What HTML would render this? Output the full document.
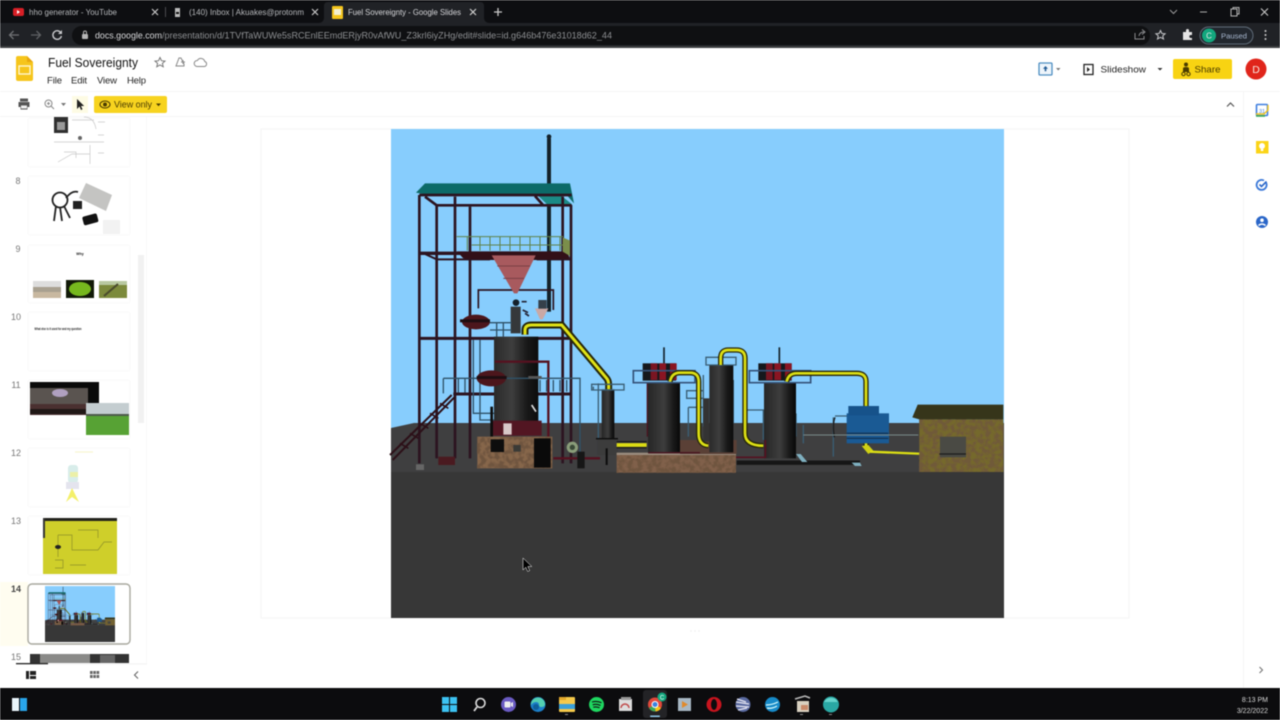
<!DOCTYPE html>
<html lang="en"><head><meta charset="utf-8"><title>Fuel Sovereignty - Google Slides</title>
<style>
html,body{margin:0;padding:0;width:1280px;height:720px;overflow:hidden;background:#fff}
svg{display:block}
#root{filter:blur(.45px)}
text{font-family:"Liberation Sans",sans-serif}
</style></head><body>
<svg id="root" xmlns="http://www.w3.org/2000/svg" width="1280" height="720" viewBox="0 0 1280 720">
<defs>
<linearGradient id="cyl" x1="0" x2="1" y1="0" y2="0"><stop offset="0" stop-color="#262626"/><stop offset=".5" stop-color="#3d3d3d"/><stop offset=".8" stop-color="#181818"/><stop offset="1" stop-color="#090909"/></linearGradient>
<linearGradient id="fur" x1="0" x2="1" y1="0" y2="0"><stop offset="0" stop-color="#2a2a2a"/><stop offset=".4" stop-color="#3e3e3e"/><stop offset=".75" stop-color="#181818"/><stop offset="1" stop-color="#0c0c0c"/></linearGradient>
<filter id="n" x="0" y="0" width="1" height="1"><feTurbulence type="fractalNoise" baseFrequency=".07" numOctaves="2" seed="3"/><feColorMatrix values="0 0 0 0 .16  0 0 0 0 .09  0 0 0 0 .05  0 0 0 4 -1.5"/></filter>
<g id="scene">
<rect x="391" y="129" width="613" height="489" fill="#87cdfd"/>
<polygon points="391,428 414,423 1004,423 1004,618 391,618" fill="#3f3f40"/>
<rect x="391" y="472" width="613" height="146" fill="#373737"/>
<g transform="translate(390 130) scale(.33333)">
 <!-- stack -->
 <rect x="471" y="25" width="12" height="520" fill="#14222a"/><circle cx="477" cy="20" r="7" fill="#14222a"/>
 <!-- roof -->
 <polygon points="78,188 105,160 540,160 552,220 530,195 100,192" fill="#0c6a68"/>
 <polygon points="445,198 515,198 545,222 470,222" fill="#1b8a86"/>
 <g fill="none" stroke="#2c1420">
  <path d="M88 195V1000M140 225V985M195 200V985M240 230V985M518 200V1000M543 225V1000" stroke-width="8"/>
  <path d="M88 195H545M105 200L140 226H545M435 198L460 226" stroke-width="8"/>
  <path d="M90 370H540" stroke-width="10"/><path d="M105 372L140 388H300M440 388H540" stroke-width="6"/>
  <path d="M90 625H540" stroke-width="9"/>
  <path d="M190 792H540" stroke-width="9"/>
  <path d="M265 535V480H490V540" stroke-width="5"/>
 </g>
 <polygon points="200,364 530,364 540,385 450,390 300,390 220,385" fill="#321018"/>
 <g fill="none" stroke="#5f8248" stroke-width="3"><path d="M200 320H520M245 345H520M232 320V362M270 320V362M300 320V362M330 320V362M360 320V362M390 320V362M420 320V362M450 320V362M480 320V362M510 320V362"/></g>
 <polygon points="518,322 540,332 540,378 518,365" fill="#7b8e4b"/>
 <polygon points="305,376 437,376 382,490 372,490" fill="#a85a5e"/>
 <path d="M322 408H420M340 445H402" stroke="#7a3f45" stroke-width="3"/>
 <!-- upper vessels -->
 <ellipse cx="258" cy="576" rx="42" ry="22" fill="#4c161c"/><rect x="210" y="568" width="90" height="9" fill="#1e0e12"/>
 <rect x="362" y="530" width="30" height="80" fill="#35383a"/><circle cx="378" cy="518" r="10" fill="#14202a"/>
 <path d="M395 515h15M398 540l16 8M405 550l12 8" stroke="#223" stroke-width="5"/>
 <polygon points="435,535 475,535 458,568 450,568" fill="#c9a8a5"/><rect x="445" y="510" width="25" height="26" fill="#35404a"/>
 <g fill="none" stroke="#2f5268" stroke-width="4">
  <path d="M300 578H365M300 600H365M320 578V620M340 578V620"/>
  <path d="M250 630V850H312M270 630V870H312"/>
 </g>
 <!-- furnace -->
 <rect x="312" y="620" width="133" height="256" fill="url(#fur)"/>
 <path d="M315 695H475V1000" stroke="#551220" stroke-width="7" fill="none"/>
 <g fill="none" stroke="#2f5268" stroke-width="4">
  <path d="M160 745H570V970M160 745V790M205 745V788M225 745V788M250 745V788M450 750V785M470 750V785M490 750V785M510 750V785M530 750V785"/>
 </g>
 <ellipse cx="304" cy="745" rx="44" ry="24" fill="#4c161c"/><rect x="260" y="738" width="90" height="9" fill="#1e0e12"/>
 <rect x="415" y="738" width="40" height="8" fill="#555"/>
 <rect x="305" y="872" width="150" height="45" fill="#521622"/><rect x="340" y="880" width="25" height="34" fill="#d8c8c8"/>
 <path d="M425 825L438 845" stroke="#ddd" stroke-width="5"/>
 <path d="M305 830V920" stroke="#0c0c0c" stroke-width="8"/>
 <rect x="262" y="920" width="225" height="95" fill="#86664a"/><rect x="262" y="920" width="225" height="95" filter="url(#n)"/>
 <rect x="302" y="928" width="40" height="38" fill="#0d0d0d"/><rect x="432" y="925" width="50" height="88" fill="#0a0a0a"/>
 <rect x="370" y="945" width="22" height="20" fill="#3a3a36"/>
 <rect x="145" y="980" width="50" height="25" fill="#4a1a20"/>
 <rect x="78" y="1003" width="24" height="17" fill="#666"/>
 <circle cx="547" cy="952" r="17" fill="#8a9d7a"/><circle cx="547" cy="952" r="8" fill="#3a4a38"/>
 <path d="M490 985H630" stroke="#551220" stroke-width="7"/><rect x="562" y="965" width="22" height="50" fill="#161616"/>
 <!-- stairs -->
 <g stroke="#2c1018" stroke-width="6" fill="none"><path d="M0 975L185 795M8 990L195 800"/><path d="M30 940L55 955M60 910L85 925M90 880L115 895M120 850L145 865M150 820L175 835" stroke-width="5"/></g>
 <!-- yellow pipe 1 -->
 <path d="M405 614V600Q405 585 425 585H515L650 745Q656 752 656 765V778" fill="none" stroke="#26260a" stroke-width="21"/>
 <path d="M405 614V600Q405 585 425 585H515L650 745Q656 752 656 765V778" fill="none" stroke="#e0e216" stroke-width="9"/>
 <!-- scrubber -->
 <rect x="635" y="778" width="38" height="148" fill="url(#cyl)"/>
 <path d="M605 763H702V780H605ZM625 760V925M610 770V780" fill="none" stroke="#3a5e74" stroke-width="4"/>
 <rect x="622" y="925" width="62" height="50" fill="#3c3c3c"/><path d="M618 926H684" stroke="#0c0c0c" stroke-width="4"/>
 <path d="M650 955V1005" stroke="#0c0c0c" stroke-width="6"/>
</g>
<g transform="translate(590 330) scale(.33333)">
 <rect x="80" y="370" width="358" height="58" fill="#80604a"/><rect x="80" y="370" width="358" height="58" filter="url(#n)"/>
 <rect x="80" y="368" width="358" height="7" fill="#9a8c7e"/>
 <path d="M80 345H170" stroke="#dcdc14" stroke-width="11"/><path d="M80 335H170M80 353H170" stroke="#1c1c1c" stroke-width="4"/>
 <rect x="270" y="330" width="170" height="42" fill="#5a4036"/>
 <!-- tower behind -->
 <g fill="none" stroke="#3a5e74" stroke-width="4"><path d="M290 182H340V205H290ZM295 232V320M295 232H350M340 135V290M430 150V280M470 240H520V330M618 250V320"/><path d="M730 262V380M735 258H775M640 285V340"/></g>
 <rect x="340" y="205" width="18" height="130" fill="#333"/>
 <rect x="358" y="105" width="72" height="262" fill="url(#fur)"/>
 <path d="M348 82H438V105H348Z" fill="none" stroke="#3a5e74" stroke-width="4"/>
 <!-- cyl 1 -->
 <path d="M222 52V100" stroke="#14222a" stroke-width="5"/>
 <rect x="158" y="100" width="100" height="52" fill="#15181c"/><rect x="182" y="100" width="20" height="50" fill="#7a1522"/><rect x="208" y="100" width="20" height="50" fill="#8a1522"/><rect x="240" y="100" width="20" height="50" fill="#8a1522"/>
 <path d="M130 122H315V158H130Z" fill="none" stroke="#35537a" stroke-width="5"/>
 <rect x="174" y="160" width="96" height="210" fill="url(#cyl)"/>
 <path d="M172 160V320M175 368H330" stroke="#4a1420" stroke-width="4"/>
 <!-- cyl 3 -->
 <path d="M568 52V100" stroke="#14222a" stroke-width="5"/>
 <rect x="505" y="100" width="100" height="52" fill="#15181c"/><rect x="528" y="100" width="20" height="50" fill="#7a1522"/><rect x="553" y="100" width="20" height="50" fill="#8a1522"/><rect x="585" y="100" width="20" height="50" fill="#8a1522"/>
 <path d="M478 122H662V158H478Z" fill="none" stroke="#35537a" stroke-width="5"/>
 <rect x="522" y="160" width="96" height="225" fill="url(#cyl)"/>
 <path d="M526 330V382H438" fill="none" stroke="#551220" stroke-width="5"/>
 <path d="M440 398H810" stroke="#161616" stroke-width="13"/>
 <polygon points="618,372 632,372 652,396 636,396" fill="#7fb0c0"/><polygon points="785,398 810,398 815,408 795,408" fill="#7fb0c0"/>
 <!-- pipes -->
 <g fill="none" stroke="#26260a" stroke-width="16">
  <path d="M240 155Q245 128 270 128H300Q326 128 326 155V310Q326 345 355 347"/>
  <path d="M392 105V85Q392 60 415 60H440Q465 60 465 85V310Q465 347 520 347"/>
  <path d="M590 155Q595 130 620 130H800Q828 130 828 155V350"/>
 </g>
 <g fill="none" stroke="#dcdf14" stroke-width="8">
  <path d="M240 155Q245 128 270 128H300Q326 128 326 155V310Q326 345 355 347"/>
  <path d="M392 105V85Q392 60 415 60H440Q465 60 465 85V310Q465 347 520 347"/>
  <path d="M590 155Q595 130 620 130H800Q828 130 828 155V350"/>
 </g>
 <!-- blue tank -->
 <rect x="770" y="250" width="127" height="90" fill="#1a5a94"/><rect x="775" y="228" width="92" height="28" fill="#16528a"/>
 <path d="M770 310H895M770 325H895" stroke="#133658" stroke-width="4"/>
 <path d="M735 262q-8 20-2 60" fill="none" stroke="#1c1c1c" stroke-width="4"/>
 <path d="M640 315H985" stroke="#7a8a8a" stroke-width="3"/>
 <polygon points="815,348 835,345 850,362 835,372" fill="#cfd015"/>
 <path d="M840 365L1010 372" stroke="#dcdf14" stroke-width="7"/>
 <!-- house -->
 <rect x="988" y="268" width="252" height="158" fill="#75692c"/><rect x="988" y="268" width="252" height="158" filter="url(#n)" opacity=".7"/>
 <polygon points="967,262 983,224 1240,224 1240,268 988,268" fill="#36351a"/>
 <rect x="1050" y="320" width="78" height="62" fill="#4a4a44"/>
 <path d="M1048 372H1128" stroke="#1c1c1c" stroke-width="4"/>
</g>
</g>
</defs>

<!-- browser chrome -->
<rect width="1280" height="48" fill="#0d0e11"/>
<path d="M318 23Q324 23 324 17V6Q324 2 328 2H480Q484 2 484 6V17Q484 23 490 23Z" fill="#202226"/>
<rect y="23" width="1280" height="25" fill="#202226"/>
<rect y="46" width="1280" height="2" fill="#3c3d40"/>
<rect x="72" y="26" width="1078" height="19" rx="9.5" fill="#0f1012"/>
<!-- tabs -->
<rect x="13" y="8" width="11" height="8" rx="2" fill="#d81f26"/><path d="M17 10v4l3-2z" fill="#fff"/>
<text x="29" y="15" font-size="8.5" fill="#b5b7ba" textLength="88" lengthAdjust="spacingAndGlyphs">hho generator - YouTube</text>
<path d="M152 9l6 6M158 9l-6 6" stroke="#c8c8c8" stroke-width="1.2"/>
<rect x="165" y="7" width="1" height="10" fill="#4a4b4e"/>
<path d="M175 8h5v9h-5z" fill="#bbb"/><rect x="176" y="12" width="3" height="2" fill="#111"/>
<text x="189" y="15" font-size="8.5" fill="#b5b7ba" textLength="115" lengthAdjust="spacingAndGlyphs">(140) Inbox | Akuakes@protonm</text>
<path d="M312 9l6 6M318 9l-6 6" stroke="#c8c8c8" stroke-width="1.2"/>
<rect x="332" y="6" width="11" height="13" rx="1" fill="#f4c51c"/><rect x="334" y="9" width="7" height="6" fill="#f3efcf"/>
<text x="348" y="15" font-size="8.5" fill="#d4d5d8" textLength="113" lengthAdjust="spacingAndGlyphs">Fuel Sovereignty - Google Slides</text>
<path d="M470 9l6 6M476 9l-6 6" stroke="#d0d0d0" stroke-width="1.2"/>
<path d="M498 8v8M494 12h8" stroke="#c8c8c8" stroke-width="1.3"/>
<path d="M1170 10l3.5 3.5 3.5-3.5" fill="none" stroke="#9a9a9a"/>
<path d="M1200 12h7" stroke="#aaa"/>
<rect x="1231" y="9" width="6" height="7" fill="none" stroke="#b5b5b5"/><path d="M1233 9V7.500h6v6.500h-2" fill="none" stroke="#b5b5b5"/>
<path d="M1261 8.500l7 7M1268 8.500l-7 7" stroke="#c8c8c8" stroke-width="1.1"/>
<!-- nav -->
<path d="M19 35h-9M13.500 31l-4 4 4 4" fill="none" stroke="#6f7174" stroke-width="1.300"/>
<path d="M31 35h9M36.500 31l4 4-4 4" fill="none" stroke="#5f6164" stroke-width="1.300"/>
<path d="M61 33a4.300 4.300 0 1 0 .4 3" fill="none" stroke="#c8c9cc" stroke-width="1.400"/><path d="M62 30v4h-4z" fill="#c8c9cc"/>
<rect x="82" y="34" width="6" height="5" rx="1" fill="#b5b5b5"/><path d="M83.500 34v-1.500a1.500 1.500 0 0 1 3 0V34" fill="none" stroke="#b5b5b5"/>
<text x="95" y="38.500" font-size="9" fill="#d8d9db" textLength="67" lengthAdjust="spacingAndGlyphs">docs.google.com</text>
<text x="162" y="38.500" font-size="9" fill="#8d8f92" textLength="450" lengthAdjust="spacingAndGlyphs">/presentation/d/1TVfTaWUWe5sRCEnlEEmdERjyR0vAfWU_Z3krl6iyZHg/edit#slide=id.g646b476e31018d62_44</text>
<path d="M1135 33v6h9v-3M1139 36q.5-4 5-4M1142 29.500l3 2.500-3 2.500" fill="none" stroke="#8a8b8e"/>
<path d="M1160.500 30.500l1.400 3 3.200.3-2.400 2.100.8 3.100-3-1.700-3 1.700.8-3.100-2.400-2.100 3.200-.3z" fill="none" stroke="#c8c9cc"/>
<path d="M1183 33h3v-1.500a1.500 1.500 0 0 1 3 0V33h3v3h-1.200a1.500 1.500 0 0 0 0 3H1192v2h-9z" fill="#e4e4e4" transform="translate(0 -1)"/>
<rect x="1200" y="27" width="53" height="17" rx="8.500" fill="#22272e" stroke="#5f6b78"/>
<circle cx="1209" cy="35.500" r="7" fill="#13a77e"/><text x="1209" y="38.500" font-size="8" fill="#e8e8e8" text-anchor="middle">C</text>
<text x="1221" y="38.500" font-size="7.500" fill="#a8b8d0" textLength="26" lengthAdjust="spacingAndGlyphs">Paused</text>
<circle cx="1265.500" cy="31" r="1" fill="#ccc"/><circle cx="1265.500" cy="35" r="1" fill="#ccc"/><circle cx="1265.500" cy="39" r="1" fill="#ccc"/>

<!-- header -->
<rect y="91" width="1280" height="1" fill="#f6f6f6"/>
<rect y="116" width="1243" height="1" fill="#f5f5f5"/>
<rect x="1243" y="92" width="1" height="596" fill="#f6f6f6"/>
<path d="M16 58Q16 56 18 56H27L33 62V79Q33 81 31 81H18Q16 81 16 79Z" fill="#f6c51b"/><path d="M27 56l6 6h-6z" fill="#e8a80e"/><rect x="19" y="66" width="11" height="8" fill="none" stroke="#fff6cf" stroke-width="1.400"/>
<text x="48" y="67" font-size="12.500" fill="#111" textLength="90" lengthAdjust="spacingAndGlyphs">Fuel Sovereignty</text>
<path d="M160 57.500l1.500 3.200 3.500.4-2.600 2.300.8 3.400-3.200-1.800-3.200 1.800.8-3.400-2.600-2.300 3.500-.4z" fill="none" stroke="#777" stroke-width="1"/>
<path d="M176 66l3-8 2 0 3 6v2zM181 62h4M183 60v4" fill="none" stroke="#888" stroke-width="1"/>
<path d="M197 66.500a3 3 0 0 1 .4-6a4 4 0 0 1 7.400 1a2.600 2.600 0 0 1-.3 5z" fill="none" stroke="#888" stroke-width="1"/>
<g font-size="9.500" fill="#222"><text x="47" y="83.500" textLength="15">File</text><text x="71" y="83.500" textLength="16">Edit</text><text x="97" y="83.500" textLength="20">View</text><text x="127" y="83.500" textLength="19">Help</text></g>
<!-- toolbar -->
<path d="M20 101.500v-3h8v3M18.500 102h11v5h-2v2.500h-7V107h-2z" fill="#555"/><rect x="21" y="105.500" width="6" height="3" fill="#eee"/>
<circle cx="48.500" cy="103.500" r="3.500" fill="none" stroke="#888"/><path d="M51 106l3 3M47 103.500h3M48.500 102v3" stroke="#888"/>
<path d="M61 103h5l-2.500 3z" fill="#777"/>
<rect x="72" y="96" width="16" height="17" fill="#fdfbe4"/>
<path d="M77 99v10l2.500-2.500 1.500 3.500 1.500-.7-1.500-3.300h3.200z" fill="#222"/>
<rect x="94" y="96" width="73" height="17" rx="2" fill="#f7d31f"/>
<circle cx="105" cy="104.500" r="2" fill="#4a3c00"/><ellipse cx="105" cy="104.500" rx="5" ry="3.500" fill="none" stroke="#4a3c00" stroke-width="1.100"/>
<text x="114" y="107.500" font-size="9" fill="#4a3c00" textLength="38" lengthAdjust="spacingAndGlyphs">View only</text>
<path d="M156 103.500h5l-2.500 2.700z" fill="#4a3c00"/>
<path d="M1227 106.500l3.500-3.500 3.500 3.500" fill="none" stroke="#555" stroke-width="1.200"/>
<!-- right header -->
<rect x="1039" y="63" width="13" height="12" rx="1" fill="#eef5fb" stroke="#4d8ec2" stroke-width="1.300"/><path d="M1045.500 66l-2.500 2.700h1.700v2.500h1.600v-2.500h1.700z" fill="#1f5a94"/>
<path d="M1056 68h4.500l-2.250 2.500z" fill="#777"/>
<rect x="1084" y="64.500" width="9" height="10" fill="none" stroke="#222" stroke-width="1.300"/><path d="M1087 67v5l3-2.500z" fill="#222"/>
<text x="1100.500" y="72.500" font-size="9.500" fill="#222" textLength="45.500" lengthAdjust="spacingAndGlyphs">Slideshow</text>
<path d="M1157.500 68h5l-2.500 2.500z" fill="#333"/>
<rect x="1173" y="59" width="59" height="20" rx="2" fill="#f8d312"/>
<circle cx="1186" cy="64.500" r="2" fill="#4a3c00"/><path d="M1183 72v-3.500q0-1.500 3-1.500t3 1.500V72z" fill="#4a3c00"/><circle cx="1183.500" cy="74" r="1.700" fill="none" stroke="#4a3c00"/><circle cx="1188.500" cy="74" r="1.700" fill="none" stroke="#4a3c00"/>
<text x="1194.500" y="72.500" font-size="9.500" fill="#4a3c00" textLength="26" lengthAdjust="spacingAndGlyphs">Share</text>
<circle cx="1256" cy="69" r="10.500" fill="#e0251b"/><text x="1256" y="73" font-size="10.500" fill="#f8e8e0" text-anchor="middle">D</text>
<!-- side panel -->
<rect x="1256.500" y="104.500" width="11" height="11" rx="1" fill="#fff" stroke="#3f7fe0" stroke-width="1.600"/><path d="M1256 114h8l4-4v-5" fill="none" stroke="#f5c518" stroke-width="1.400"/><path d="M1256 116h9" stroke="#34a853" stroke-width="1.500"/><text x="1262" y="113" font-size="5.500" fill="#3f7fe0" text-anchor="middle">31</text>
<rect x="1256" y="141" width="12.500" height="12.500" fill="#fbd417"/><circle cx="1262" cy="146" r="3" fill="#fff"/><rect x="1260.800" y="149" width="2.500" height="2" fill="#fff"/>
<path d="M1266 182.500a5 5 0 1 1-2-2" fill="none" stroke="#3a78d8" stroke-width="1.800"/><path d="M1259.500 184.500l2 2 5-5" fill="none" stroke="#2a66c8" stroke-width="1.600"/>
<circle cx="1262" cy="222" r="6" fill="#2a66c8"/><circle cx="1262" cy="220.200" r="1.800" fill="#fff"/><path d="M1258.500 225.500q3.500-3 7 0" fill="none" stroke="#fff" stroke-width="1.500"/>
<path d="M1259.500 667l3 3-3 3" fill="none" stroke="#777" stroke-width="1.100"/>

<!-- filmstrip frames -->
<g fill="#fff" stroke="#f9f9f9"><rect x="28" y="118" width="102" height="49" rx="2"/><rect x="28" y="176" width="102" height="59" rx="2"/><rect x="28" y="245" width="102" height="58" rx="2"/><rect x="28" y="312" width="102" height="59" rx="2"/><rect x="28" y="380" width="102" height="59" rx="2"/><rect x="28" y="448" width="102" height="59" rx="2"/><rect x="28" y="516" width="102" height="59" rx="2"/></g>
<rect x="138" y="255" width="6" height="168" fill="#f1f1f1"/>
<rect x="146" y="117" width="1" height="571" fill="#f9f9f9"/>
<rect y="582" width="28" height="64" fill="#fffdf0"/>
<g font-size="9" fill="#777" text-anchor="middle"><text x="18" y="184">8</text><text x="18" y="252">9</text><text x="16" y="320">10</text><text x="16" y="388">11</text><text x="16" y="456">12</text><text x="16" y="524">13</text><text x="16" y="592" fill="#444" font-weight="bold">14</text><text x="16" y="660">15</text></g>
<!-- thumb 7 -->
<rect x="54" y="117" width="14" height="16" fill="#2f2f2f"/><rect x="57" y="122" width="8" height="8" fill="#999"/>
<g fill="none" stroke="#c8c8c8" stroke-width=".7"><path d="M72 120h22M84 117q10 0 12 12M54 142h50M58 162l14-8h18v10M64 152h12v6M90 145v18M98 122h7M98 135h6M98 153h6"/></g>
<circle cx="80" cy="138" r="2" fill="#666"/>
<!-- thumb 8 -->
<polygon points="86,183 112,195 106,211 79,198" fill="#c4c4c2"/>
<g fill="none" stroke="#222" stroke-width="1.800"><circle cx="60" cy="200" r="7.500"/><path d="M56 206l-2 15M60 207l2 14M64 206l6 12M66 198q6-8 12-6"/></g>
<rect x="73" y="201" width="9" height="8" fill="#222"/><rect x="83" y="215" width="15" height="9" rx="2" transform="rotate(-15 90 220)" fill="#111"/>
<rect x="103" y="220" width="17" height="14" fill="#f2f2f2"/>
<!-- thumb 9 -->
<text x="80" y="255" font-size="3.500" font-weight="bold" fill="#111" text-anchor="middle">Why</text>
<rect x="33" y="281" width="28" height="17" fill="#a8a090"/><rect x="33" y="292" width="28" height="6" fill="#c8b8a0"/><rect x="33" y="281" width="28" height="6" fill="#ddd"/>
<rect x="66" y="280" width="28" height="18" fill="#121a08"/><ellipse cx="80" cy="289" rx="11" ry="7" fill="#76b81e"/>
<rect x="99" y="281" width="28" height="17" fill="#7c8a3c"/><rect x="99" y="281" width="28" height="4" fill="#b8c8a0"/><path d="M104 296l14-12" stroke="#4a4a2c" stroke-width="2"/>
<!-- thumb 10 -->
<text x="58" y="330" font-size="3.400" font-weight="bold" fill="#222" text-anchor="middle" textLength="47" lengthAdjust="spacingAndGlyphs">What else is it used for and my question</text>
<!-- thumb 11 -->
<rect x="30" y="382" width="69" height="33" fill="#0a0a0a"/><rect x="30" y="388" width="58" height="27" fill="#5a5450"/><ellipse cx="60" cy="393" rx="8" ry="4" fill="#b0a0c0"/><rect x="30" y="404" width="58" height="11" fill="#4a3030"/><rect x="30" y="409" width="58" height="5" fill="#201816"/>
<rect x="86" y="403" width="43" height="32" fill="#57a234"/><rect x="86" y="403" width="43" height="11" fill="#c4cdd0"/><rect x="86" y="414" width="43" height="2" fill="#4d5a4a"/>
<!-- thumb 12 -->
<rect x="68" y="465" width="10" height="18" rx="3" fill="#d8edea"/><rect x="70" y="472" width="8" height="5" fill="#ecf0a8"/><rect x="66" y="482" width="13" height="7" fill="#e4e4ee"/><polygon points="72,488 79,502 72,497 66,502" fill="#f4f06a"/><path d="M75 452h18" stroke="#f6f4c8"/>
<!-- thumb 13 -->
<rect x="43" y="518" width="74" height="56" fill="#cfcf2a"/><rect x="43" y="518" width="74" height="3" fill="#23231c"/><rect x="43" y="518" width="2" height="20" fill="#333"/>
<g fill="none" stroke="#8d9028" stroke-width=".7"><path d="M58 535h14v15h26l6-8h8M58 535v22M70 565h16M78 530h20v8M55 560h8v8h-8"/></g><ellipse cx="58" cy="547" rx="3" ry="2" fill="#222"/>
<!-- thumb 14 -->
<rect x="28" y="584" width="102" height="60" rx="4" fill="#fff" stroke="#a8a89e" stroke-width="1.400"/>
<svg x="45" y="586" width="70" height="56" viewBox="391 129 613 489"><use href="#scene"/></svg>
<!-- thumb 15 -->
<rect x="30" y="654" width="99" height="9" fill="#333"/><rect x="40" y="654" width="50" height="9" fill="#8a8a88"/><rect x="100" y="655" width="15" height="8" fill="#666"/>
<rect y="663" width="147" height="25" fill="#fff"/>
<rect x="16" y="663" width="32" height="1.300" fill="#222"/><rect x="48" y="663.400" width="99" height="1" fill="#f0f0f0"/>
<path d="M26 671h3v8h-3zM30 671h6v4h-6zM30 676h6v3h-6z" fill="#222"/>
<g fill="#666"><rect x="90" y="671" width="2.600" height="3"/><rect x="93.300" y="671" width="2.600" height="3"/><rect x="96.600" y="671" width="2.600" height="3"/><rect x="90" y="675" width="2.600" height="3"/><rect x="93.300" y="675" width="2.600" height="3"/><rect x="96.600" y="675" width="2.600" height="3"/></g>
<path d="M138 671.500l-3.500 3.500 3.500 3.500" fill="none" stroke="#666" stroke-width="1.100"/>

<!-- slide -->
<rect x="261" y="129" width="868" height="489" fill="#fff" stroke="#f4f4f4"/>
<use href="#scene"/>
<path d="M690 631h10" stroke="#eee" stroke-dasharray="2 2"/>
<path d="M523 558v12l2.800-2.800 1.900 4.300 2-.9-1.900-4.100h4z" fill="#000" stroke="#fff" stroke-width=".5"/>

<!-- taskbar -->
<rect y="688" width="1280" height="32" fill="#0c0c0e"/>
<rect x="12" y="698" width="7" height="13" fill="#eaf6fc"/><rect x="20" y="698" width="7" height="13" fill="#29a5ea"/>
<g fill="#3cc2f2"><rect x="442" y="697" width="7" height="7"/><rect x="450" y="697" width="7" height="7"/><rect x="442" y="705" width="7" height="7"/><rect x="450" y="705" width="7" height="7"/></g>
<circle cx="480.500" cy="703" r="4.500" fill="none" stroke="#ddd" stroke-width="1.600"/><path d="M477 707l-3 4" stroke="#ddd" stroke-width="1.800"/>
<circle cx="508.500" cy="704.500" r="7.500" fill="#6a5bc2"/><rect x="504.500" y="701.500" width="6" height="6" rx="1" fill="#eee"/><path d="M511 703l2-1v5l-2-1z" fill="#eee"/>
<circle cx="538" cy="704.500" r="7.500" fill="#1c7fc8"/><path d="M531 705a7 7 0 0 1 14-1q0 3-4 3-2 0-2-2 0-3-3-3-3 0-5 3" fill="#53d0b0"/><circle cx="536" cy="707" r="3" fill="#0f5f9a"/>
<rect x="559" y="697" width="16" height="15" rx="1" fill="#f5c94a"/><rect x="559" y="697" width="7" height="3" fill="#e3a82c"/><rect x="559" y="704" width="16" height="5" fill="#3aa0d8"/><rect x="565" y="714" width="3" height="1" fill="#888"/>
<circle cx="596.500" cy="704.500" r="7.500" fill="#1ed760"/><path d="M592 702q5-1.500 9.500.7M592.700 704.800q4-1.200 7.800.7M593.300 707.200q3.300-.8 6.300.6" fill="none" stroke="#111" stroke-width="1.100"/>
<rect x="619" y="699" width="13" height="12" fill="#ddd"/><rect x="621" y="697" width="10" height="3" fill="#999"/><path d="M621 708a4 4 0 0 1 8 0" fill="none" stroke="#c04a4a" stroke-width="1.500"/>
<rect x="643" y="690" width="24" height="28" rx="3" fill="#232326"/>
<circle cx="655" cy="704.500" r="7" fill="#e2483a"/><path d="M655 704.500L649 708a7 7 0 0 0 6.500 3.500z" fill="#3aa857"/><path d="M655 704.500l6 3.500a7 7 0 0 1-5.500 3.500z" fill="#f5c518"/><circle cx="655" cy="704.500" r="3" fill="#3b82e0" stroke="#fff"/>
<circle cx="662" cy="697" r="4.500" fill="#13a77e"/><text x="662" y="699.500" font-size="6" fill="#fff" text-anchor="middle">C</text>
<rect x="650" y="715.500" width="10" height="1.500" rx=".7" fill="#8ec8e8"/>
<rect x="678" y="698" width="13" height="13" fill="#a8b8c4"/><path d="M682 701v7l6-3.500z" fill="#e08a2c"/>
<circle cx="714" cy="704.500" r="7.500" fill="#c8141e"/><ellipse cx="714" cy="704.500" rx="3" ry="5.500" fill="#0c0c0e"/>
<circle cx="743" cy="704.500" r="7.500" fill="#5a6aa0"/><path d="M736 702l13 2M736 706l13 1M737 699l9 3M738 710l9-2" stroke="#e8e8f4" stroke-width="1.200"/>
<circle cx="772.500" cy="704.500" r="7.500" fill="#178ac8"/><path d="M766 705q6 0 12-3M767 708q5 1 10-2" fill="none" stroke="#dff" stroke-width="1.200"/>
<rect x="797" y="701" width="12" height="11" fill="#d8d0c0"/><rect x="801" y="705" width="7" height="5" fill="#c88a6a"/><path d="M795 699l10-3 5 2" fill="none" stroke="#bbb" stroke-width="1.500"/><rect x="800" y="714" width="3" height="1" fill="#888"/>
<circle cx="831" cy="704.500" r="8" fill="#2aa8a4"/><path d="M824 702a8 8 0 0 1 14 0z" fill="#66d4cc"/><rect x="829" y="714" width="3" height="1" fill="#888"/>
<text x="1268" y="702" font-size="7" fill="#d8d8d8" text-anchor="end">8:13 PM</text>
<text x="1268" y="713" font-size="7" fill="#d8d8d8" text-anchor="end">3/22/2022</text>
</svg>
</body></html>
